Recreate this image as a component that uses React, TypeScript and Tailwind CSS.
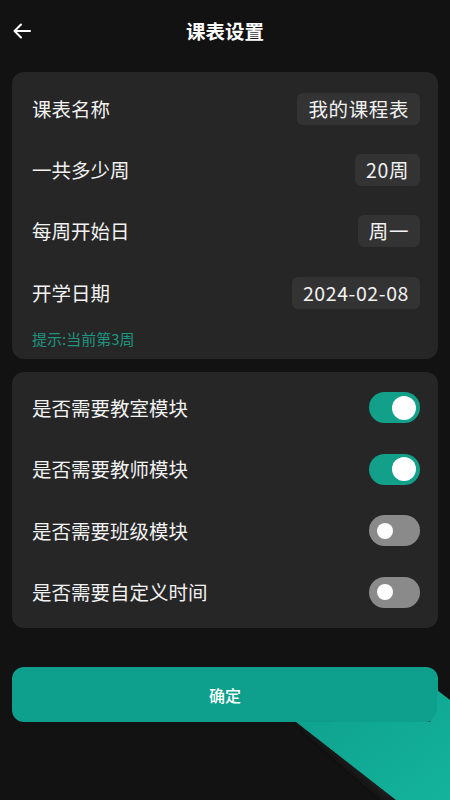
import { useState } from "react";

const infoRows = [
  { label: "课表名称", value: "我的课程表" },
  { label: "一共多少周", value: "20周" },
  { label: "每周开始日", value: "周一" },
  { label: "开学日期", value: "2024-02-08" },
];

const initialToggles = [
  { label: "是否需要教室模块", on: true },
  { label: "是否需要教师模块", on: true },
  { label: "是否需要班级模块", on: false },
  { label: "是否需要自定义时间", on: false },
];

function Toggle({ on, onClick }: { on: boolean; onClick: () => void }) {
  return (
    <button
      onClick={onClick}
      className={`flex h-[31px] w-[51px] items-center rounded-full ${
        on ? "justify-end bg-[#12a08a] pr-[4px]" : "justify-start bg-[#8a8a8a] pl-[8px]"
      }`}
    >
      <span className={`rounded-full bg-white ${on ? "h-[24px] w-[24px]" : "h-[16px] w-[16px]"}`} />
    </button>
  );
}

export default function App() {
  const [toggles, setToggles] = useState(initialToggles);

  return (
    <div
      className="relative h-[800px] w-[450px] overflow-hidden bg-[#121212] text-white"
      style={{ fontFamily: '"Noto Sans CJK SC", "Noto Sans", sans-serif' }}
    >
      {/* Header */}
      <header className="relative flex h-[62px] items-center justify-center">
        <button className="absolute left-[12px] top-[21px]">
          <svg viewBox="0 0 20 20" fill="none" stroke="white" strokeWidth={2} className="h-[20px] w-[20px]">
            <path strokeLinecap="round" strokeLinejoin="round" d="M18 10H3M9 3.5L2.5 10 9 16.5" />
          </svg>
        </button>
        <h1 className="text-[19.5px] font-bold leading-[26px]">课表设置</h1>
      </header>

      <div className="flex flex-col gap-[13px] px-[12px] pt-[10px]">
        {/* Basic info */}
        <section className="rounded-[12px] bg-[#262626] pl-[20px] pr-[18px] pt-[6px] pb-[10px]">
          {infoRows.map((row) => (
            <div key={row.label} className="flex h-[61.3px] items-center justify-between">
              <span className="text-[19.5px] leading-[26px] text-[#f2f2f2]">{row.label}</span>
              <span className="flex h-[32px] items-center rounded-[6px] bg-[#333333] px-[11px] text-[19.5px] leading-[26px] tracking-[0.6px] text-[#f2f2f2]">
                {row.value}
              </span>
            </div>
          ))}
          <p className="mt-[6px] text-[15px] leading-[20px] text-[#1f9480]">提示:当前第3周</p>
        </section>

        {/* Modules */}
        <section className="rounded-[12px] bg-[#262626] py-[5px] pl-[20px] pr-[18px]">
          {toggles.map((t, i) => (
            <div key={t.label} className="flex h-[61.5px] items-center justify-between">
              <span className="text-[19.5px] leading-[26px] text-[#f2f2f2]">{t.label}</span>
              <Toggle
                on={t.on}
                onClick={() =>
                  setToggles((prev) => prev.map((p, j) => (j === i ? { ...p, on: !p.on } : p)))
                }
              />
            </div>
          ))}
        </section>

        <button className="mt-[26px] flex h-[55px] items-center justify-center rounded-[12px] bg-[#0ea08c] text-[16px] font-medium text-white">
          确定
        </button>
      </div>

      {/* ripple wedge */}
      <svg className="pointer-events-none absolute left-0 top-0" width={450} height={800} viewBox="0 0 450 800">
        <defs>
          <linearGradient id="wedge" x1="0" y1="0" x2="1" y2="1">
            <stop offset="0" stopColor="#0ea08c" />
            <stop offset="1" stopColor="#14b39c" />
          </linearGradient>
          <filter id="soft" x="-10%" y="-10%" width="120%" height="120%">
            <feGaussianBlur stdDeviation="3" />
          </filter>
        </defs>
        <polygon points="302,727 330,727 420,800 385,800" fill="#1c1c1c" filter="url(#soft)" />
        <polygon points="296,722 430,722 437,712 437,690 450,700 450,800 396,800" fill="url(#wedge)" />
      </svg>
    </div>
  );
}
